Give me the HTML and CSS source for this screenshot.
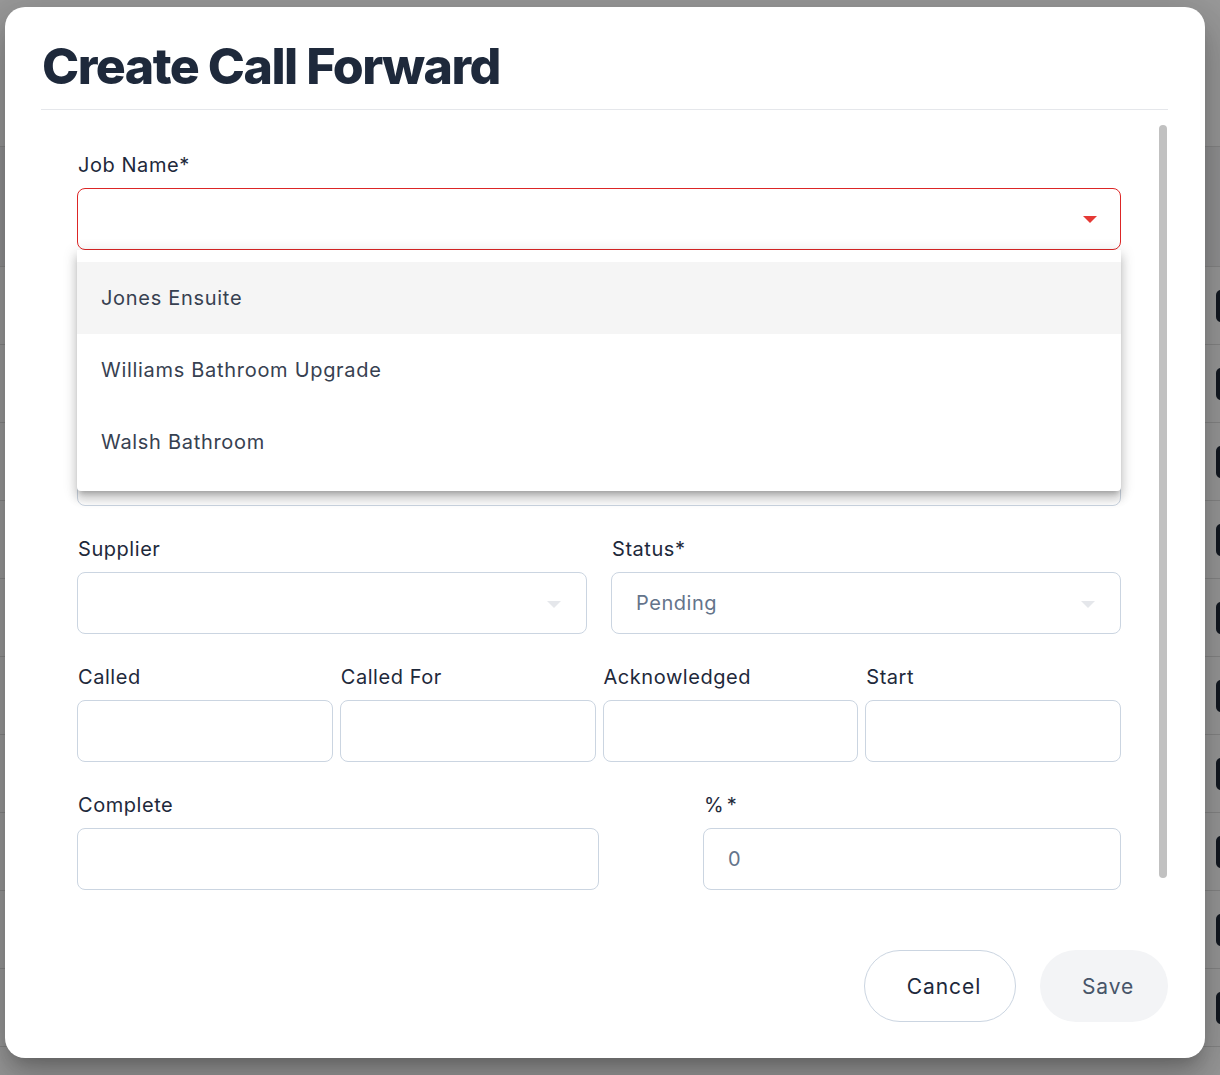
FILE: index.html
```html
<!DOCTYPE html>
<html lang="en">
<head>
<meta charset="utf-8">
<title>Create Call Forward</title>
<link rel="stylesheet" href="styles.css">
</head>
<body>
<div class="page">
  <div class="page-head"></div>
  <div class="page-band"></div>
  <div class="page-row"><span class="row-btn"></span></div>
  <div class="page-row"><span class="row-btn"></span></div>
  <div class="page-row"><span class="row-btn"></span></div>
  <div class="page-row"><span class="row-btn"></span></div>
  <div class="page-row"><span class="row-btn"></span></div>
  <div class="page-row"><span class="row-btn"></span></div>
  <div class="page-row"><span class="row-btn"></span></div>
  <div class="page-row"><span class="row-btn"></span></div>
  <div class="page-row"><span class="row-btn"></span></div>
  <div class="page-row"><span class="row-btn"></span></div>
</div>
<div class="overlay"></div>
<div class="modal">
  <div class="modal-header">
    <h1 class="title">Create Call Forward</h1>
  </div>
  <div class="modal-body">
    <form class="form">
      <div class="field">
        <label class="label">Job Name*</label>
        <div class="input select error">
          <span class="caret caret-red"></span>
        </div>
        <ul class="menu">
          <li class="menu-item active">Jones Ensuite</li>
          <li class="menu-item">Williams Bathroom Upgrade</li>
          <li class="menu-item">Walsh Bathroom</li>
        </ul>
      </div>
      <div class="field">
        <span class="label"></span>
        <div class="input"></div>
      </div>
      <div class="field">
        <span class="label"></span>
        <div class="input"></div>
      </div>
      <div class="row row-2">
        <div class="field">
          <label class="label">Supplier</label>
          <div class="input select"><span class="caret"></span></div>
        </div>
        <div class="field">
          <label class="label">Status*</label>
          <div class="input select"><span class="value">Pending</span><span class="caret"></span></div>
        </div>
      </div>
      <div class="row row-4">
        <div class="field">
          <label class="label">Called</label>
          <div class="input"></div>
        </div>
        <div class="field">
          <label class="label">Called For</label>
          <div class="input"></div>
        </div>
        <div class="field">
          <label class="label">Acknowledged</label>
          <div class="input"></div>
        </div>
        <div class="field">
          <label class="label">Start</label>
          <div class="input"></div>
        </div>
      </div>
      <div class="row row-split">
        <div class="field">
          <label class="label">Complete</label>
          <div class="input"></div>
        </div>
        <div class="field">
          <label class="label label-pct">%*</label>
          <div class="input"><span class="value">0</span></div>
        </div>
      </div>
    </form>
    <div class="scroll-track"><div class="scroll-thumb"></div></div>
  </div>
  <div class="modal-footer">
    <button class="btn btn-outline" type="button">Cancel</button>
    <button class="btn btn-muted" type="button">Save</button>
  </div>
</div>
</body>
</html>
```

FILE: styles.css
```css
* { box-sizing: border-box; }
html, body { margin: 0; padding: 0; }
body {
  width: 1220px;
  height: 1075px;
  overflow: hidden;
  background: #ffffff;
  font-family: Inter, "Noto Sans", sans-serif;
  position: relative;
}

/* underlying page */
.page { display: flex; flex-direction: column; }
.page-head { height: 147px; border-bottom: 1px solid #e0e0e0; }
.page-band { height: 120px; background: #f3f4f6; border-bottom: 1px solid #e0e0e0; }
.page-row {
  height: 78px;
  border-bottom: 1px solid #e0e0e0;
  display: flex;
  align-items: center;
  justify-content: flex-end;
}
.row-btn {
  width: 20px; height: 32px;
  border-radius: 5px;
  background: #1f2937;
  margin-right: -16px;
}

.overlay {
  position: absolute;
  inset: 0;
  background: rgba(0, 0, 0, 0.4);
}

/* modal */
.modal {
  position: absolute;
  left: 5px;
  top: 7px;
  width: 1200px;
  height: 1051px;
  background: #ffffff;
  border-radius: 20px;
  box-shadow: 0 11px 15px -7px rgba(0,0,0,.2), 0 24px 38px 3px rgba(0,0,0,.14), 0 9px 46px 8px rgba(0,0,0,.12);
  display: flex;
  flex-direction: column;
  padding: 0 37px 36px 36px;
}
.modal-header {
  height: 103px;
  border-bottom: 1px solid #e5e7eb;
  display: flex;
  align-items: center;
  padding-top: 16px;
}
.title {
  margin: 0 0 0 1px;
  font-size: 50px;
  font-weight: 800;
  letter-spacing: -1.5px;
  color: #1e293b;
  line-height: 1;
}
.modal-body {
  height: 805px;
  display: flex;
}
.form {
  flex: 1;
  padding: 41px 38px 0 36px;
  display: flex;
  flex-direction: column;
  gap: 29px;
}
.scroll-track {
  width: 8px;
  padding: 15px 0 37px;
  margin-right: 1px;
}
.scroll-thumb {
  height: 100%;
  border-radius: 4px;
  background: #c1c1c1;
}

.field { position: relative; display: flex; flex-direction: column; min-width: 0; }
.label {
  display: block;
  font-size: 20px;
  line-height: 28px;
  height: 28px;
  margin: 0 0 9px 1px;
  color: #1e293b;
  letter-spacing: 0.55px;
}
.label-pct { letter-spacing: 3px; }
.input {
  height: 62px;
  border: 1px solid #cbd5e1;
  border-radius: 8px;
  display: flex;
  align-items: center;
  padding: 0 24px;
  position: relative;
  background: #fff;
}
.input.error { border-color: #dc2626; }
.value { font-size: 20px; color: #64748b; letter-spacing: 0.55px; }
.caret {
  position: absolute;
  right: 25px;
  top: 28px;
  width: 0; height: 0;
  border-left: 7px solid transparent;
  border-right: 7px solid transparent;
  border-top: 7px solid #e5e7eb;
}
.caret-red { border-top-color: #e53935; right: 23px; top: 27px; }

.menu {
  position: absolute;
  left: 0; right: 0;
  top: 99px;
  margin: 0;
  padding: 12px 0 13px;
  list-style: none;
  background: #fff;
  border-radius: 0 0 4px 4px;
  z-index: 5;
  box-shadow: 0 5px 5px -3px rgba(0,0,0,.2), 0 8px 10px 1px rgba(0,0,0,.14), 0 3px 14px 2px rgba(0,0,0,.12);
}
.menu-item {
  height: 72px;
  display: flex;
  align-items: center;
  padding: 0 24px;
  font-size: 20px;
  color: #374151;
  letter-spacing: 0.7px;
}
.menu-item.active { background: #f5f5f5; }

.row { display: grid; }
.row-2 { grid-template-columns: 1fr 1fr; column-gap: 24px; }
.row-4 { grid-template-columns: repeat(4, 1fr); column-gap: 7px; }
.row-split { grid-template-columns: 522px 418px; justify-content: space-between; }

.modal-footer {
  flex: 1;
  display: flex;
  justify-content: flex-end;
  align-items: flex-end;
  gap: 24px;
  padding-bottom: 0;
}
.btn {
  height: 72px;
  border-radius: 36px;
  font-family: Inter, "Noto Sans", sans-serif;
  font-size: 21px;
  letter-spacing: 0.9px;
  cursor: pointer;
  padding: 0 0 0 8px;
}
.btn-outline {
  width: 152px;
  background: #fff;
  border: 1px solid #cbd5e1;
  color: #1e293b;
}
.btn-muted {
  width: 128px;
  background: #f3f4f6;
  border: none;
  color: #475569;
}
```
